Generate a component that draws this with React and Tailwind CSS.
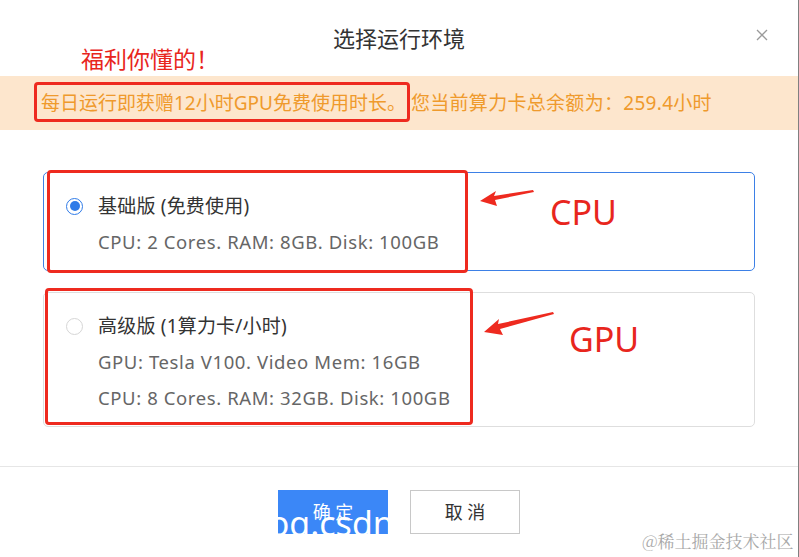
import React from "react";

const FONT = "font-['Noto_Sans','Noto_Sans_CJK_SC',sans-serif]";

function Radio({ checked }) {
  return checked ? (
    <span className="flex h-[17px] w-[17px] shrink-0 items-center justify-center rounded-full border border-[#2f7be8] bg-white">
      <span className="h-[10px] w-[10px] rounded-full bg-[#2f7be8]" />
    </span>
  ) : (
    <span className="h-[17px] w-[17px] shrink-0 rounded-full border border-[#d6d6d6] bg-white" />
  );
}

function Card({ checked, title, lines }) {
  return (
    <div
      className={
        "flex items-start gap-[15px] rounded-[5px] border pl-[22px] pt-[15px] pb-[10px] " +
        (checked ? "border-[#3d80e6]" : "border-[#dedede]")
      }
    >
      <div className="flex h-[36px] items-center">
        <Radio checked={checked} />
      </div>
      <div className="flex flex-col">
        <div className="text-[19px] leading-[36px] tracking-[0.2px] text-[#333]">{title}</div>
        {lines.map((l) => (
          <div key={l} className="text-[18.5px] leading-[36px] tracking-[0.6px] text-[#666]">
            {l}
          </div>
        ))}
      </div>
    </div>
  );
}

export default function App() {
  return (
    <div className={"relative h-[557px] w-[799px] overflow-hidden border-r border-[#808080] bg-white " + FONT}>
      {/* header */}
      <div className="relative flex h-[76px] items-center justify-center">
        <div className="text-[22px] text-[#333]">选择运行环境</div>
        <svg className="absolute right-[30px] top-[29px]" width="12" height="12" viewBox="0 0 12 12">
          <path d="M1 1 L11 11 M11 1 L1 11" stroke="#9a9a9a" strokeWidth="1.3" fill="none" />
        </svg>
      </div>

      {/* banner */}
      <div className="flex h-[54px] items-center bg-[#fde6cd] pl-[41px] text-[19px] text-[#ef9a2c]">
        <span>每日运行即获赠12小时GPU免费使用时长。</span>
        <span className="ml-[5px] tracking-[0.3px]">您当前算力卡总余额为：259.4小时</span>
      </div>

      {/* body */}
      <div className="flex flex-col gap-[23px] px-[43px] pt-[42px] pb-[42px]">
        <div className="h-[97px]">
          <Card checked title="基础版 (免费使用)" lines={["CPU: 2 Cores. RAM: 8GB. Disk: 100GB"]} />
        </div>
        <div className="h-[132px]">
          <Card
            title="高级版 (1算力卡/小时)"
            lines={["GPU: Tesla V100. Video Mem: 16GB", "CPU: 8 Cores. RAM: 32GB. Disk: 100GB"]}
          />
        </div>
      </div>

      {/* footer */}
      <div className="flex justify-center gap-[22px] border-t border-[#e6e6e6] pt-[23px]">
        <button className="flex h-[44px] w-[110px] items-center justify-center bg-[#3b87f7] text-[18px] text-white">
          确 定
        </button>
        <button className="flex h-[44px] w-[110px] items-center justify-center border border-[#c8c8c8] bg-white text-[18px] text-[#333]">
          取 消
        </button>
      </div>

      {/* annotations */}
      <div className="absolute left-[81px] top-[43px] text-[23px] leading-[32px] text-[#e8261d]">福利你懂的！</div>
      <div className="absolute left-[34px] top-[82px] h-[40px] w-[376px] rounded-[4px] border-[3px] border-[#ee2a1f]" />
      <div className="absolute left-[47px] top-[170px] h-[103px] w-[421px] rounded-[4px] border-[3px] border-[#ee2a1f]" />
      <div className="absolute left-[45px] top-[288px] h-[137px] w-[428px] rounded-[4px] border-[3px] border-[#ee2a1f]" />
      <div className="absolute left-[550px] top-[189px] text-[34px] leading-[46px] text-[#e8261d]">CPU</div>
      <div className="absolute left-[569px] top-[316px] text-[34px] leading-[46px] text-[#e8261d]">GPU</div>
      <svg className="absolute left-0 top-0" width="799" height="557" viewBox="0 0 799 557">
        <polygon points="480,201 496,191 494,196 533,190 534,192 495,200 497,206" fill="#ee2a1f" />
        <polygon points="484,332 499,319 498,324 553,312 554,314 500,329 503,335" fill="#ee2a1f" />
      </svg>

      {/* watermarks */}
      <div className="absolute left-[239px] top-[501px] text-[34px] leading-[44px] text-white">blog.csdn</div>
      <div className="absolute left-[642px] top-[530px] font-['Noto_Serif_CJK_SC','Noto_Sans_CJK_SC',serif] text-[17px] leading-[22px] text-[#a8a8a8]">
        @稀土掘金技术社区
      </div>
    </div>
  );
}
